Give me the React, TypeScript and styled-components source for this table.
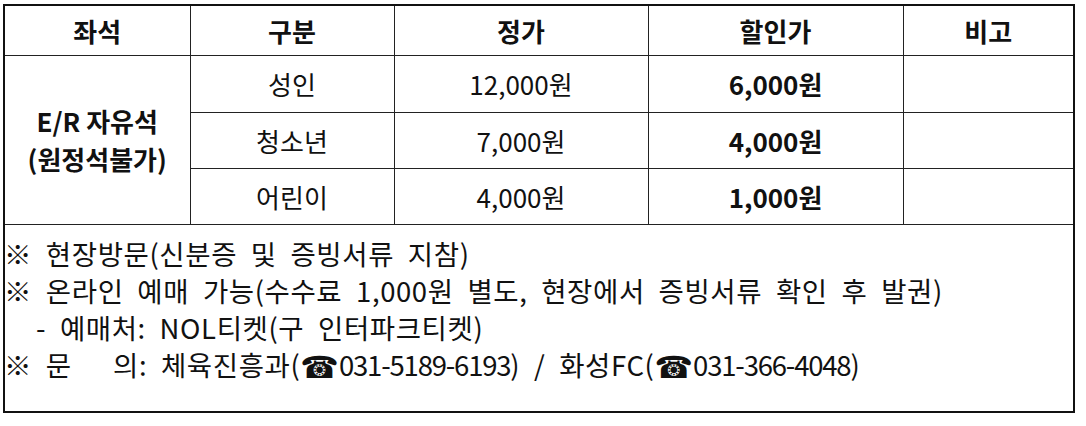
import React from "react";
import styled, { createGlobalStyle } from "styled-components";

const Global = createGlobalStyle`
  html, body { margin: 0; padding: 0; background: #fff; }
  body {
    padding: 4px 0 0 3px;
    font-family: "Noto Sans CJK KR", "Noto Sans", sans-serif;
    color: #111;
  }
`;

const Table = styled.table`
  border-collapse: collapse;
  table-layout: fixed;
  width: 1070px;
  border: 2px solid #111;
`;

const HeadCell = styled.th`
  height: 49px;
  padding: 0;
  border: 1.5px solid #222;
  font-size: 26px;
  font-weight: 700;
  text-align: center;
  vertical-align: middle;
  line-height: 1;
`;

const Cell = styled.td<{ $bold?: boolean }>`
  padding: 0;
  border: 1.5px solid #222;
  font-size: 26px;
  font-weight: ${(p) => (p.$bold ? 700 : 400)};
  text-align: center;
  vertical-align: middle;
  line-height: 1;
`;

const SeatCell = styled(Cell)`
  font-weight: 700;
  line-height: 38px;
`;

const NotesCell = styled.td`
  padding: 10px 0 28px 0;
  border: 1.5px solid #222;
  vertical-align: top;
  text-align: left;
`;

const NoteLine = styled.div<{ $indent?: number }>`
  font-size: 27.5px;
  line-height: 37px;
  white-space: pre;
  word-spacing: 7px;
  letter-spacing: 0.6px;
  padding-left: ${(p) => p.$indent ?? 0}px;
  margin-left: -1px;
`;

const Digits = styled.span`
  letter-spacing: -1.2px;
`;

const Phone = styled.span`
  font-family: "DejaVu Sans", sans-serif;
  font-size: 31px;
  line-height: 1;
  letter-spacing: 0;
  vertical-align: -2px;
`;

const Row = styled.tr<{ $h: number }>`
  height: ${(p) => p.$h}px;
`;

const rows = [
  { kind: "성인", price: "12,000원", sale: "6,000원", h: 57 },
  { kind: "청소년", price: "7,000원", sale: "4,000원", h: 56 },
  { kind: "어린이", price: "4,000원", sale: "1,000원", h: 56 },
];

export default function App() {
  return (
    <>
      <Global />
      <Table>
        <colgroup>
          <col style={{ width: 186 }} />
          <col style={{ width: 204 }} />
          <col style={{ width: 254 }} />
          <col style={{ width: 255 }} />
          <col style={{ width: 171 }} />
        </colgroup>
        <thead>
          <tr>
            <HeadCell>좌석</HeadCell>
            <HeadCell>구분</HeadCell>
            <HeadCell>정가</HeadCell>
            <HeadCell>할인가</HeadCell>
            <HeadCell>비고</HeadCell>
          </tr>
        </thead>
        <tbody>
          {rows.map((r, i) => (
            <Row key={r.kind} $h={r.h}>
              {i === 0 && (
                <SeatCell rowSpan={3}>
                  E/R 자유석
                  <br />
                  (원정석불가)
                </SeatCell>
              )}
              <Cell>{r.kind}</Cell>
              <Cell>{r.price}</Cell>
              <Cell $bold>{r.sale}</Cell>
              <Cell />
            </Row>
          ))}
          <tr>
            <NotesCell colSpan={5}>
              <NoteLine>※ 현장방문(신분증 및 증빙서류 지참)</NoteLine>
              <NoteLine>※ 온라인 예매 가능(수수료 1,000원 별도, 현장에서 증빙서류 확인 후 발권)</NoteLine>
              <NoteLine $indent={32}>- 예매처: NOL티켓(구 인터파크티켓)</NoteLine>
              <NoteLine>
                ※ 문{"   "}의: 체육진흥과(<Phone>☎</Phone><Digits>031-5189-6193</Digits>) / 화성FC(<Phone>☎</Phone><Digits>031-366-4048</Digits>)
              </NoteLine>
            </NotesCell>
          </tr>
        </tbody>
      </Table>
    </>
  );
}
